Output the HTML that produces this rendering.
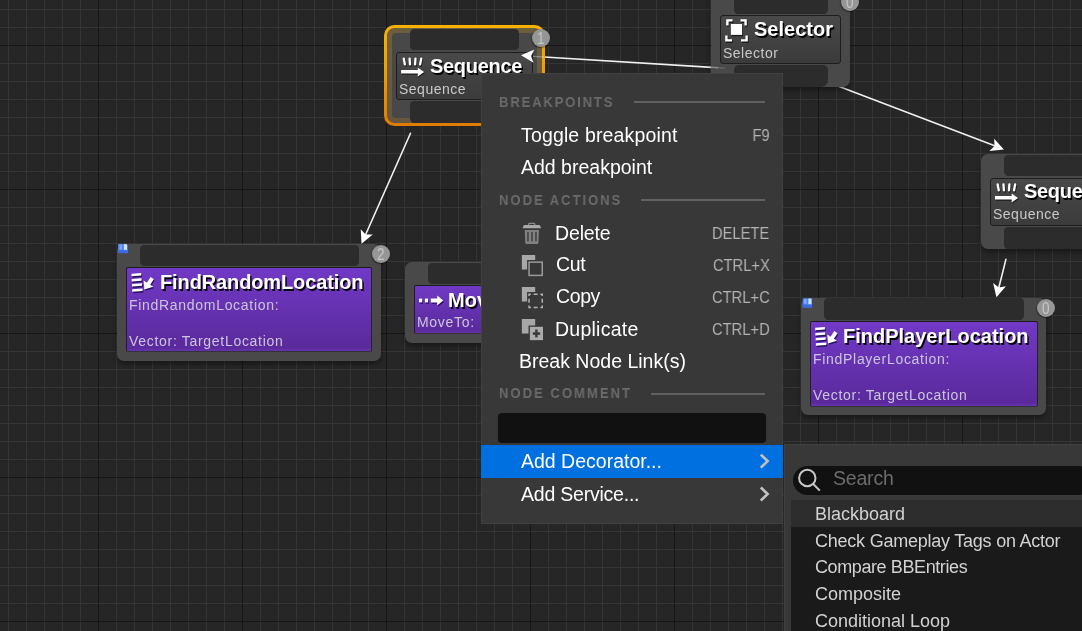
<!DOCTYPE html>
<html><head><meta charset="utf-8"><title>Behavior Tree</title>
<style>
html,body{margin:0;padding:0;}
body{width:1082px;height:631px;overflow:hidden;position:relative;background:#262626;font-family:"Liberation Sans",sans-serif;}
.grid{position:absolute;left:0;top:0;width:1082px;height:631px;
background-image:
linear-gradient(to bottom,#171717 1px,transparent 1px),linear-gradient(to right,#171717 1px,transparent 1px),
linear-gradient(to bottom,#353535 1px,transparent 1px),linear-gradient(to right,#353535 1px,transparent 1px);
background-size:144px 144px,144px 144px,18px 18px,18px 18px;
background-position:0 45px,98px 0,0 9px,8px 0;}
.abs{position:absolute;}
.body{position:absolute;background:#494949;border-radius:7px;box-shadow:0 3px 5px rgba(0,0,0,.38);}
.pin{position:absolute;background:#2c2c2c;border-radius:4.2px;}
.box{position:absolute;border:1px solid #1e1e1e;border-radius:3px;background:linear-gradient(#494949,#3b3b3b);box-sizing:border-box;}
.pbox{position:absolute;border:1px solid;border-color:#1c1c1c #262328 #35303a #222024;border-radius:2px;background:linear-gradient(#7139c6,#5a2a9c 96%,#6633b0);background-clip:padding-box;background-color:#333;box-sizing:border-box;}
.title,.sub,.mi,.sc,.li,.hdr,.idx,#srch{will-change:transform;}
.title{position:absolute;color:#fff;font-weight:bold;font-size:20px;line-height:22px;white-space:nowrap;text-shadow:1.5px 1.5px 0 #000;}
.sub{position:absolute;color:#c9c9c9;font-size:14px;line-height:18px;white-space:nowrap;letter-spacing:.5px;}
.psub{color:#cdc5dd;letter-spacing:.7px;}
.idx{position:absolute;width:18px;height:18px;border-radius:50%;background:#969696;color:#c6c6c6;font-size:17px;line-height:19px;text-align:center;box-shadow:-.5px 1px 1.5px rgba(0,0,0,.5);}
.idx span{display:inline-block;transform:scaleX(.8);}
.menu{position:absolute;left:481px;top:73px;width:302px;height:451px;background:#383838;box-sizing:border-box;border:1px solid #414141;}
.hdr{position:absolute;left:499.4px;color:#6b6b6b;font-weight:bold;font-size:14.4px;letter-spacing:2px;line-height:16px;white-space:nowrap;transform:scaleX(.909);transform-origin:0 50%;}
.sep{position:absolute;height:2px;background:#616161;}
.mi{position:absolute;color:#fff;font-size:19.5px;line-height:24px;white-space:nowrap;}
.sc{position:absolute;color:#b4b4b4;font-size:16px;line-height:20px;white-space:nowrap;text-align:right;right:312.5px;transform:scaleX(.92);transform-origin:100% 50%;}
.li{position:absolute;left:815.3px;color:#d2d2d2;font-size:18px;line-height:22px;white-space:nowrap;}
</style></head><body>
<div class="grid"></div>
<svg class="abs" style="left:0;top:0" width="1082" height="631" viewBox="0 0 1082 631">
<g stroke="#f0f0f0" stroke-width="1.6" fill="none" stroke-linecap="round">
<line x1="532" y1="56.3" x2="724" y2="68.1"/>
<line x1="410.5" y1="133.3" x2="365" y2="236"/>
<line x1="838.5" y1="86.3" x2="996" y2="146.3"/>
<line x1="1005.9" y1="259.4" x2="998.5" y2="289"/>
</g>
</svg>

<!-- Selector node -->
<div class="body" style="left:711px;top:-12px;width:139px;height:98.5px"></div>
<div class="pin" style="left:734px;top:-10px;width:94px;height:23.7px"></div>
<div class="pin" style="left:734px;top:64.5px;width:94px;height:22px;border-radius:5px 5px 7px 7px"></div>
<div class="box" style="left:720px;top:15px;width:121px;height:48.5px"></div>
<div class="title" id="t_sel" style="left:753.8px;top:18px">Selector</div>
<div class="sub" id="s_sel" style="left:722.5px;top:43.5px">Selector</div>
<div class="idx" style="left:841px;top:-6.9px"><span>0</span></div>

<!-- Sequence node (selected) -->
<div class="abs" style="left:383.9px;top:24.7px;width:161.5px;height:101.4px;border-radius:10.5px;background:linear-gradient(#f9b200,#f0a000 40%,#e07c00)"></div>
<div class="abs" style="left:387.1px;top:28px;width:155px;height:94.8px;border-radius:7.5px;background:linear-gradient(#6c5f3e,#67563f)"></div>
<div class="abs" style="left:392px;top:32.8px;width:145.2px;height:85.2px;border-radius:4px;background:#484848"></div>
<div class="pin" style="left:410px;top:28.5px;width:109px;height:21.5px"></div>
<div class="pin" style="left:410px;top:100.5px;width:109px;height:22px"></div>
<div class="box" style="left:396px;top:51.5px;width:136.5px;height:48px"></div>
<div class="title" id="t_seq1" style="letter-spacing:-.3px;left:429.8px;top:54.5px">Sequence</div>
<div class="sub" id="s_seq1" style="left:398.5px;top:79.5px">Sequence</div>
<div class="idx" style="left:532px;top:28.8px"><span>1</span></div>

<!-- Sequence node (right) -->
<div class="body" style="left:981px;top:153.5px;width:140px;height:95px"></div>
<div class="pin" style="left:1004px;top:154.5px;width:100px;height:21.5px"></div>
<div class="pin" style="left:1004px;top:226.5px;width:100px;height:22px"></div>
<div class="box" style="left:990px;top:177.5px;width:120px;height:48px"></div>
<div class="title" id="t_seq2" style="letter-spacing:-.3px;left:1023.8px;top:180px">Sequence</div>
<div class="sub" id="s_seq2" style="left:992.5px;top:205px">Sequence</div>

<!-- FindRandomLocation -->
<div class="body" style="left:117px;top:243.5px;width:264px;height:117.5px"></div>
<div class="pin" style="left:140px;top:244.5px;width:219px;height:21px"></div>
<div class="pbox" style="left:126px;top:266.8px;width:246.3px;height:85.2px"></div>
<div class="title" id="t_frl" style="letter-spacing:-.12px;left:159.6px;top:270.5px">FindRandomLocation</div>
<div class="sub psub" id="s_frl1" style="left:128.5px;top:296px">FindRandomLocation:</div>
<div class="sub psub" id="s_frl2" style="left:128.5px;top:332px">Vector: TargetLocation</div>
<div class="idx" style="left:372px;top:245.3px"><span>2</span></div>
<div class="abs" style="left:118px;top:244.5px;width:9.5px;height:8.5px;background:#3f74e8"></div>

<!-- MoveTo -->
<div class="body" style="left:405px;top:261.5px;width:140px;height:81px"></div>
<div class="pin" style="left:428px;top:262.5px;width:100px;height:21px"></div>
<div class="pbox" style="left:414px;top:285px;width:120px;height:49.3px"></div>
<div class="title" id="t_mv" style="left:447.8px;top:288.5px">MoveTo</div>
<div class="sub psub" id="s_mv" style="left:416.5px;top:313px">MoveTo:</div>

<!-- FindPlayerLocation -->
<div class="body" style="left:800.8px;top:297.6px;width:245.2px;height:117px"></div>
<div class="pin" style="left:824px;top:298px;width:200px;height:22px"></div>
<div class="pbox" style="left:810.2px;top:321.3px;width:227.8px;height:85.3px"></div>
<div class="title" id="t_fpl" style="left:843.3px;top:324.5px">FindPlayerLocation</div>
<div class="sub psub" id="s_fpl1" style="left:812.5px;top:349.5px">FindPlayerLocation:</div>
<div class="sub psub" id="s_fpl2" style="left:812.5px;top:386px">Vector: TargetLocation</div>
<div class="idx" style="left:1037px;top:299px"><span>0</span></div>
<div class="abs" style="left:802.5px;top:298.5px;width:9px;height:8.5px;background:#3f74e8"></div>

<!-- arrowheads on top -->
<svg class="abs" style="left:0;top:0" width="1082" height="631" viewBox="0 0 1082 631">
<g stroke="#fff" stroke-width="1.4" fill="none"><line x1="711" y1="67.3" x2="718" y2="67.7" opacity=".35"/><line x1="717" y1="67.65" x2="725" y2="68.15" opacity=".18"/><line x1="533" y1="56.35" x2="544" y2="57" opacity=".3"/></g><g id="nicons"><g stroke="#1c1c1c" stroke-width="2.3" stroke-linecap="round" fill="none"><path d="M404.45 59.80 L405.55 65.60"/><path d="M410.32 59.80 L410.68 65.60"/><path d="M416.18 59.80 L415.82 65.60"/><path d="M421.95 59.80 L420.85 65.60"/></g><path fill="#1c1c1c" d="M401.80 71.20 L418.50 71.20 L418.50 68.90 L424.80 73.20 L418.50 77.80 L418.50 74.80 L401.80 74.80 Z"/><g stroke="#fff" stroke-width="2.3" stroke-linecap="round" fill="none"><path d="M403.75 58.60 L404.85 64.40"/><path d="M409.62 58.60 L409.98 64.40"/><path d="M415.48 58.60 L415.12 64.40"/><path d="M421.25 58.60 L420.15 64.40"/></g><path fill="#fff" d="M401.10 70.00 L417.80 70.00 L417.80 67.70 L424.10 72.00 L417.80 76.60 L417.80 73.60 L401.10 73.60 Z"/><g stroke="#1c1c1c" stroke-width="2.3" stroke-linecap="round" fill="none"><path d="M998.35 185.70 L999.45 191.50"/><path d="M1004.22 185.70 L1004.58 191.50"/><path d="M1010.08 185.70 L1009.72 191.50"/><path d="M1015.85 185.70 L1014.75 191.50"/></g><path fill="#1c1c1c" d="M995.70 197.10 L1012.40 197.10 L1012.40 194.80 L1018.70 199.10 L1012.40 203.70 L1012.40 200.70 L995.70 200.70 Z"/><g stroke="#fff" stroke-width="2.3" stroke-linecap="round" fill="none"><path d="M997.65 184.50 L998.75 190.30"/><path d="M1003.52 184.50 L1003.88 190.30"/><path d="M1009.38 184.50 L1009.02 190.30"/><path d="M1015.15 184.50 L1014.05 190.30"/></g><path fill="#fff" d="M995.00 195.90 L1011.70 195.90 L1011.70 193.60 L1018.00 197.90 L1011.70 202.50 L1011.70 199.50 L995.00 199.50 Z"/><g fill="none" stroke="#1a1a1a" stroke-width="2.4"><path d="M728.20 26.80 L728.20 21.70 L733.30 21.70"/><path d="M741.30 21.70 L746.40 21.70 L746.40 26.80"/><path d="M727.20 36.80 L727.20 41.70 L732.80 41.70"/><path d="M741.80 41.70 L747.40 41.70 L747.40 36.80"/></g><rect x="731.70" y="25.30" width="11.2" height="10.9" fill="#1a1a1a"/><g fill="none" stroke="#fff" stroke-width="2.4"><path d="M727.40 25.50 L727.40 20.40 L732.50 20.40"/><path d="M740.50 20.40 L745.60 20.40 L745.60 25.50"/><path d="M726.40 35.50 L726.40 40.40 L732.00 40.40"/><path d="M741.00 40.40 L746.60 40.40 L746.60 35.50"/></g><rect x="730.90" y="24.00" width="11.2" height="10.9" fill="#fff"/><g fill="#2b1160"><path d="M132.30 275.10 L142.00 274.40 L142.00 277.00 L132.30 277.70 Z"/><path d="M132.50 280.30 L142.30 279.60 L142.30 282.20 L132.50 282.90 Z"/><path d="M132.80 285.30 L142.80 284.60 L142.80 287.20 L132.80 287.90 Z"/><path d="M133.00 290.60 L143.40 289.90 L143.40 292.50 L133.00 293.20 Z"/><path d="M144.40 282.00 L145.10 290.80 L154.00 288.20 L151.00 286.20 L154.60 280.60 L151.40 278.40 L147.70 284.10 Z"/></g><g fill="#fff"><path d="M131.50 273.70 L141.20 273.00 L141.20 275.60 L131.50 276.30 Z"/><path d="M131.70 278.90 L141.50 278.20 L141.50 280.80 L131.70 281.50 Z"/><path d="M132.00 283.90 L142.00 283.20 L142.00 285.80 L132.00 286.50 Z"/><path d="M132.20 289.20 L142.60 288.50 L142.60 291.10 L132.20 291.80 Z"/><path d="M143.60 280.60 L144.30 289.40 L153.20 286.80 L150.20 284.80 L153.80 279.20 L150.60 277.00 L146.90 282.70 Z"/></g><g fill="#2b1160"><path d="M816.00 329.10 L825.70 328.40 L825.70 331.00 L816.00 331.70 Z"/><path d="M816.20 334.30 L826.00 333.60 L826.00 336.20 L816.20 336.90 Z"/><path d="M816.50 339.30 L826.50 338.60 L826.50 341.20 L816.50 341.90 Z"/><path d="M816.70 344.60 L827.10 343.90 L827.10 346.50 L816.70 347.20 Z"/><path d="M828.10 336.00 L828.80 344.80 L837.70 342.20 L834.70 340.20 L838.30 334.60 L835.10 332.40 L831.40 338.10 Z"/></g><g fill="#fff"><path d="M815.20 327.70 L824.90 327.00 L824.90 329.60 L815.20 330.30 Z"/><path d="M815.40 332.90 L825.20 332.20 L825.20 334.80 L815.40 335.50 Z"/><path d="M815.70 337.90 L825.70 337.20 L825.70 339.80 L815.70 340.50 Z"/><path d="M815.90 343.20 L826.30 342.50 L826.30 345.10 L815.90 345.80 Z"/><path d="M827.30 334.60 L828.00 343.40 L836.90 340.80 L833.90 338.80 L837.50 333.20 L834.30 331.00 L830.60 336.70 Z"/></g><g fill="#2b1160"><rect x="419.80" y="300.00" width="3.2" height="3.8"/><rect x="425.70" y="300.00" width="3.2" height="3.8"/><path d="M431.60 300.00 L438.00 300.00 L438.00 297.00 L444.00 301.90 L438.00 306.80 L438.00 303.80 L431.60 303.80 Z"/></g><g fill="#fff"><rect x="419.00" y="298.60" width="3.2" height="3.8"/><rect x="424.90" y="298.60" width="3.2" height="3.8"/><path d="M430.80 298.60 L437.20 298.60 L437.20 295.60 L443.20 300.50 L437.20 305.40 L437.20 302.40 L430.80 302.40 Z"/></g><g><rect x="118.1" y="243.9" width="8.9" height="9.2" fill="#4f80ee"/><rect x="118.1" y="250.3" width="8.9" height="2.8" fill="#3a69e2"/><rect x="123.89999999999999" y="244.20000000000002" width="3.1" height="5.6" fill="#cfe2ff"/><rect x="119.5" y="244.5" width="2.6" height="5" fill="#7ea6f6"/></g><g><rect x="802.6" y="298.3" width="8.9" height="9.2" fill="#4f80ee"/><rect x="802.6" y="304.7" width="8.9" height="2.8" fill="#3a69e2"/><rect x="808.4" y="298.6" width="3.1" height="5.6" fill="#cfe2ff"/><rect x="804.0" y="298.90000000000003" width="2.6" height="5" fill="#7ea6f6"/></g></g>
<g fill="#fff">
<path id="ah" d="M0 0 L-13 -6.6 L-10 0 L-13 6.6 Z" transform="translate(521 55.3) rotate(183.5)"/>
<path d="M0 0 L-13 -6.6 L-10 0 L-13 6.6 Z" transform="translate(361.5 243.7) rotate(113.9)"/>
<path d="M0 0 L-13 -6.6 L-10 0 L-13 6.6 Z" transform="translate(1003.9 149.5) rotate(20.9)"/>
<path d="M0 0 L-13 -6.6 L-10 0 L-13 6.6 Z" transform="translate(996.4 297.2) rotate(104)"/>
</g>
</svg>

<!-- context menu -->
<div class="menu"></div>
<div class="hdr" id="h1" style="top:93.5px">BREAKPOINTS</div>
<div class="sep" style="left:634px;top:101px;width:131px"></div>
<div class="mi" id="m1" style="letter-spacing:.15px;left:520.6px;top:123px">Toggle breakpoint</div>
<div class="sc" id="k1" style="top:125.5px">F9</div>
<div class="mi" id="m2" style="left:520.6px;top:155px">Add breakpoint</div>
<div class="hdr" id="h2" style="letter-spacing:2.15px;top:191.5px">NODE ACTIONS</div>
<div class="sep" style="left:641px;top:199px;width:124px"></div>
<div class="mi" id="m3" style="letter-spacing:-.15px;left:555px;top:220.7px">Delete</div>
<div class="sc" id="k3" style="top:223.5px">DELETE</div>
<div class="mi" id="m4" style="letter-spacing:-.3px;left:556px;top:252.4px">Cut</div>
<div class="sc" id="k4" style="top:255.5px">CTRL+X</div>
<div class="mi" id="m5" style="letter-spacing:-.4px;left:556px;top:284.2px">Copy</div>
<div class="sc" id="k5" style="top:287.5px">CTRL+C</div>
<div class="mi" id="m6" style="letter-spacing:.25px;left:555px;top:316.6px">Duplicate</div>
<div class="sc" id="k6" style="top:319.5px">CTRL+D</div>
<div class="mi" id="m7" style="left:519px;top:348.5px">Break Node Link(s)</div>
<div class="hdr" id="h3" style="letter-spacing:2.2px;top:385px">NODE COMMENT</div>
<div class="sep" style="left:651px;top:393px;width:114px"></div>
<div class="abs" style="left:498px;top:413px;width:268px;height:30px;background:#111;border-radius:4px"></div>
<div class="abs" style="left:481px;top:445.3px;width:302px;height:32.5px;background:#0070e0"></div>
<div class="mi" id="m8" style="left:520.5px;top:448.5px">Add Decorator...</div>
<div class="mi" id="m9" style="letter-spacing:-.22px;left:520.5px;top:481.5px">Add Service...</div>

<!-- submenu -->
<div class="abs" style="left:783.5px;top:444px;width:300px;height:190px;background:#383838;border:1px solid #404040;box-sizing:border-box"></div>
<div class="abs" style="left:792.5px;top:465.5px;width:300px;height:29.5px;background:#111;border-radius:15px"></div>
<div class="abs" id="srch" style="left:833px;top:465.8px;color:#6c6c6c;font-size:19.5px;letter-spacing:-.2px;line-height:24px">Search</div>
<div class="abs" style="left:791px;top:500px;width:300px;height:140px;background:#1a1a1a"></div>
<div class="abs" style="left:791px;top:500px;width:300px;height:27px;background:#2d2d2d"></div>
<div class="li" id="l1" style="top:502.7px">Blackboard</div>
<div class="li" id="l2" style="letter-spacing:-.23px;top:529.5px">Check Gameplay Tags on Actor</div>
<div class="li" id="l3" style="letter-spacing:-.4px;top:556.2px">Compare BBEntries</div>
<div class="li" id="l4" style="top:582.9px">Composite</div>
<div class="li" id="l5" style="top:609.8px">Conditional Loop</div>

<!-- menu icons -->
<svg class="abs" style="left:0;top:0" width="1082" height="631" viewBox="0 0 1082 631">
<g id="icons"><g><path d="M528.6 225.4 L528.6 224.2 Q528.6 223.3 529.5 223.3 L533.9 223.3 Q534.8 223.3 534.8 224.2 L534.8 225.4" fill="none" stroke="#8c8c8c" stroke-width="1.3"/><path d="M522.6 228.2 L523.4 226 Q523.7 225.1 524.7 225.1 L539 225.1 Q540 225.1 540.3 226 L541.1 228.2 Z" fill="#a9a9a9"/><path d="M524.7 230.1 L539 230.1 L538.4 243 Q538.3 243.9 537.4 243.9 L526.3 243.9 Q525.4 243.9 525.3 243 Z" fill="#808080"/><rect x="527.1" y="232" width="1.7" height="9.3" fill="#484848"/><rect x="531.1" y="232" width="1.7" height="9.3" fill="#484848"/><rect x="535.1" y="232" width="1.7" height="9.3" fill="#484848"/></g><path d="M521.85 255.0 L535.2 255.0 L535.2 260.0 L527.1 260.0 L527.1 269.5 L521.85 269.5 Z" fill="#a8a8a8"/><rect x="529.05" y="262.15" width="13.2" height="13.25" fill="#363636" stroke="#9a9a9a" stroke-width="1.5"/><path d="M528.3 276.15 L543 276.15 L543 261.4" fill="none" stroke="#b4b4b4" stroke-width="0"/><path d="M521.85 287.0 L535.2 287.0 L535.2 292.0 L527.1 292.0 L527.1 301.5 L521.85 301.5 Z" fill="#a8a8a8"/><path d="M529.05 296.04999999999995 L529.05 294.15 L530.9499999999999 294.15 M540.35 294.15 L542.25 294.15 L542.25 296.04999999999995 M542.25 305.5 L542.25 307.4 L540.35 307.4 M530.9499999999999 307.4 L529.05 307.4 L529.05 305.5 M533.65 294.15 L537.65 294.15 M533.65 307.4 L537.65 307.4 M529.05 298.77 L529.05 302.77 M542.25 298.77 L542.25 302.77" fill="none" stroke="#b0b0b0" stroke-width="1.5"/><path d="M521.85 319 L535.2 319 L535.2 325.4 L528.5 325.4 L528.5 333.5 L521.85 333.5 Z" fill="#a8a8a8"/><rect x="529.9" y="326.8" width="13.1" height="13.35" fill="#acacac"/><rect x="532.8" y="332.3" width="7.4" height="2.5" fill="#3a3a3a"/><rect x="535.2" y="329.5" width="2.4" height="7.9" fill="#3a3a3a"/><g fill="none" stroke="#c2c2c2" stroke-width="2.6"><path d="M760.8 454.6 L767.6 461.1 L760.8 467.6"/><path d="M760.8 487.5 L767.6 494 L760.8 500.5"/></g><g fill="none" stroke="#c9c9c9" stroke-width="2"><circle cx="807.3" cy="478" r="8.2"/><path d="M813 483.8 L819.8 490.6" stroke-linecap="butt"/></g></g>
</svg>
</body></html>
